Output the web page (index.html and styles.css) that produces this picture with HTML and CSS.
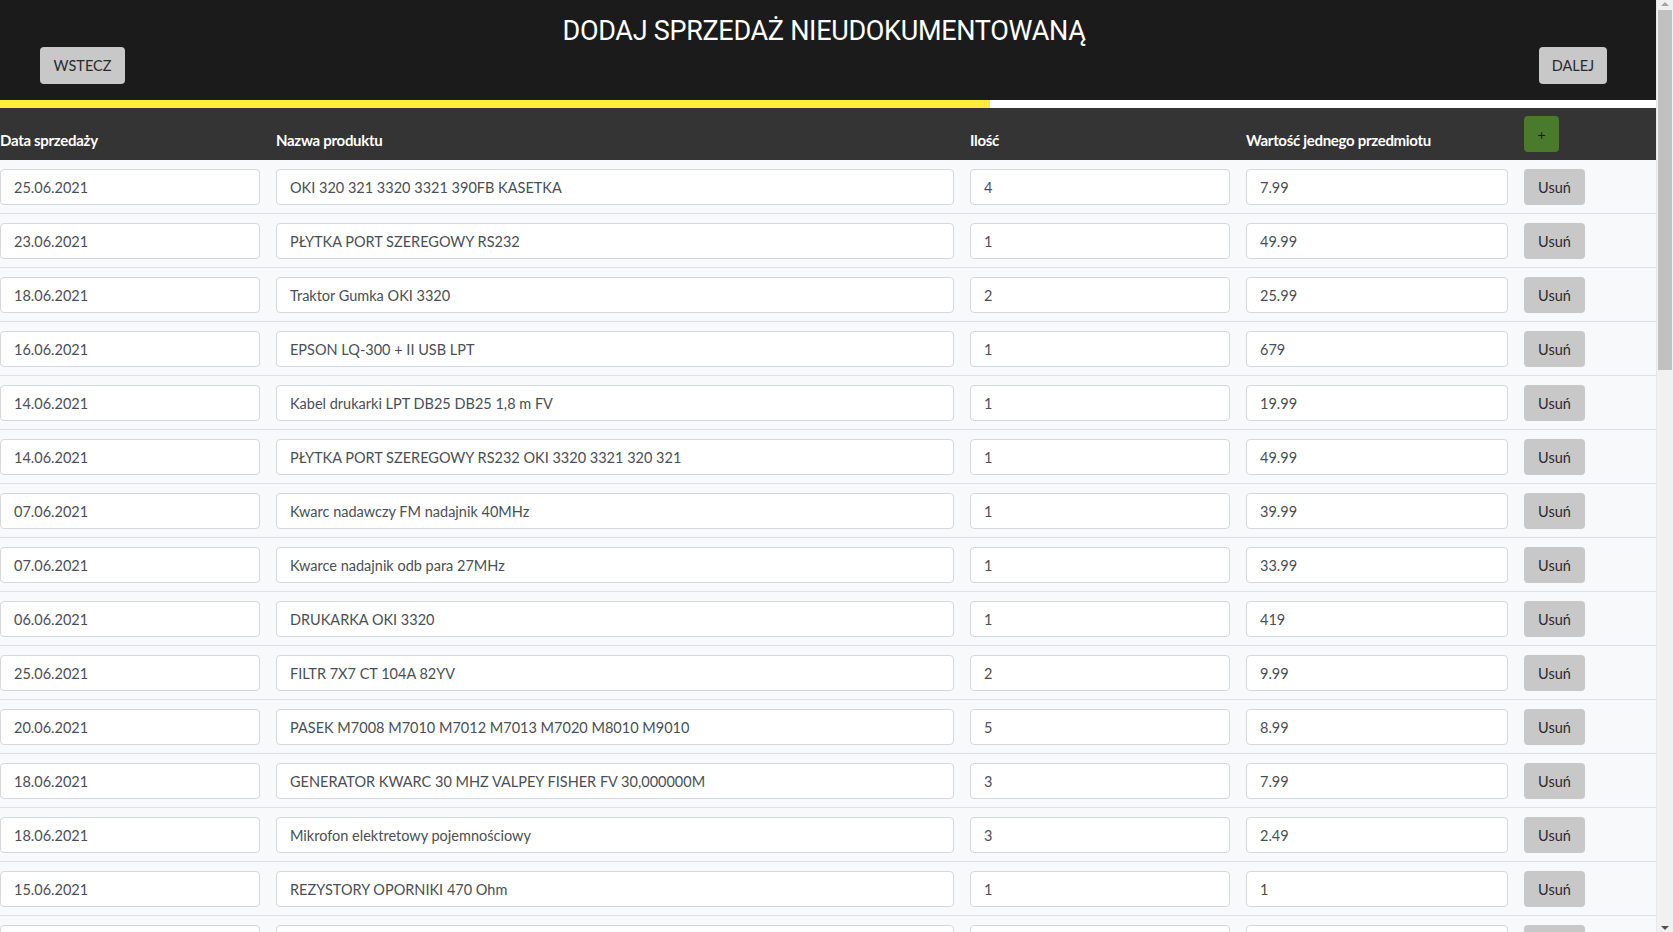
FILE: index.html
```html
<!DOCTYPE html>
<html lang="pl">
<head>
<meta charset="utf-8">
<title>Dodaj sprzedaż nieudokumentowaną</title>
<link rel="stylesheet" href="styles.css">
</head>
<body>
<div class="page">
<header class="topbar">
  <button class="btn btn-gray nav-back">WSTECZ</button>
  <h1 class="title">DODAJ SPRZEDAŻ NIEUDOKUMENTOWANĄ</h1>
  <button class="btn btn-gray nav-next">DALEJ</button>
</header>
<div class="progress"><div class="progress-fill" style="width:59.8%"></div></div>
<main class="sales">
  <div class="grid head">
    <div class="cell"><span class="label">Data sprzedaży</span></div>
    <div class="cell"><span class="label">Nazwa produktu</span></div>
    <div class="cell"><span class="label">Ilość</span></div>
    <div class="cell"><span class="label">Wartość jednego przedmiotu</span></div>
    <div class="cell"><button class="btn btn-add">+</button></div>
  </div>
  <div class="grid row"><div class="cell"><input class="field" value="25.06.2021"></div><div class="cell"><input class="field" value="OKI 320 321 3320 3321 390FB KASETKA"></div><div class="cell"><input class="field" value="4"></div><div class="cell"><input class="field" value="7.99"></div><div class="cell"><button class="btn btn-gray del">Usuń</button></div></div>
  <div class="grid row"><div class="cell"><input class="field" value="23.06.2021"></div><div class="cell"><input class="field" value="PŁYTKA PORT SZEREGOWY RS232"></div><div class="cell"><input class="field" value="1"></div><div class="cell"><input class="field" value="49.99"></div><div class="cell"><button class="btn btn-gray del">Usuń</button></div></div>
  <div class="grid row"><div class="cell"><input class="field" value="18.06.2021"></div><div class="cell"><input class="field" value="Traktor Gumka OKI 3320"></div><div class="cell"><input class="field" value="2"></div><div class="cell"><input class="field" value="25.99"></div><div class="cell"><button class="btn btn-gray del">Usuń</button></div></div>
  <div class="grid row"><div class="cell"><input class="field" value="16.06.2021"></div><div class="cell"><input class="field" value="EPSON LQ-300 + II USB LPT"></div><div class="cell"><input class="field" value="1"></div><div class="cell"><input class="field" value="679"></div><div class="cell"><button class="btn btn-gray del">Usuń</button></div></div>
  <div class="grid row"><div class="cell"><input class="field" value="14.06.2021"></div><div class="cell"><input class="field" value="Kabel drukarki LPT DB25 DB25 1,8 m FV"></div><div class="cell"><input class="field" value="1"></div><div class="cell"><input class="field" value="19.99"></div><div class="cell"><button class="btn btn-gray del">Usuń</button></div></div>
  <div class="grid row"><div class="cell"><input class="field" value="14.06.2021"></div><div class="cell"><input class="field" value="PŁYTKA PORT SZEREGOWY RS232 OKI 3320 3321 320 321"></div><div class="cell"><input class="field" value="1"></div><div class="cell"><input class="field" value="49.99"></div><div class="cell"><button class="btn btn-gray del">Usuń</button></div></div>
  <div class="grid row"><div class="cell"><input class="field" value="07.06.2021"></div><div class="cell"><input class="field" value="Kwarc nadawczy FM nadajnik 40MHz"></div><div class="cell"><input class="field" value="1"></div><div class="cell"><input class="field" value="39.99"></div><div class="cell"><button class="btn btn-gray del">Usuń</button></div></div>
  <div class="grid row"><div class="cell"><input class="field" value="07.06.2021"></div><div class="cell"><input class="field" value="Kwarce nadajnik odb para 27MHz"></div><div class="cell"><input class="field" value="1"></div><div class="cell"><input class="field" value="33.99"></div><div class="cell"><button class="btn btn-gray del">Usuń</button></div></div>
  <div class="grid row"><div class="cell"><input class="field" value="06.06.2021"></div><div class="cell"><input class="field" value="DRUKARKA OKI 3320"></div><div class="cell"><input class="field" value="1"></div><div class="cell"><input class="field" value="419"></div><div class="cell"><button class="btn btn-gray del">Usuń</button></div></div>
  <div class="grid row"><div class="cell"><input class="field" value="25.06.2021"></div><div class="cell"><input class="field" value="FILTR 7X7 CT 104A 82YV"></div><div class="cell"><input class="field" value="2"></div><div class="cell"><input class="field" value="9.99"></div><div class="cell"><button class="btn btn-gray del">Usuń</button></div></div>
  <div class="grid row"><div class="cell"><input class="field" value="20.06.2021"></div><div class="cell"><input class="field" value="PASEK M7008 M7010 M7012 M7013 M7020 M8010 M9010"></div><div class="cell"><input class="field" value="5"></div><div class="cell"><input class="field" value="8.99"></div><div class="cell"><button class="btn btn-gray del">Usuń</button></div></div>
  <div class="grid row"><div class="cell"><input class="field" value="18.06.2021"></div><div class="cell"><input class="field" value="GENERATOR KWARC 30 MHZ VALPEY FISHER FV 30,000000M"></div><div class="cell"><input class="field" value="3"></div><div class="cell"><input class="field" value="7.99"></div><div class="cell"><button class="btn btn-gray del">Usuń</button></div></div>
  <div class="grid row"><div class="cell"><input class="field" value="18.06.2021"></div><div class="cell"><input class="field" value="Mikrofon elektretowy pojemnościowy"></div><div class="cell"><input class="field" value="3"></div><div class="cell"><input class="field" value="2.49"></div><div class="cell"><button class="btn btn-gray del">Usuń</button></div></div>
  <div class="grid row"><div class="cell"><input class="field" value="15.06.2021"></div><div class="cell"><input class="field" value="REZYSTORY OPORNIKI 470 Ohm"></div><div class="cell"><input class="field" value="1"></div><div class="cell"><input class="field" value="1"></div><div class="cell"><button class="btn btn-gray del">Usuń</button></div></div>
  <div class="grid row"><div class="cell"><input class="field" value="15.06.2021"></div><div class="cell"><input class="field" value="KONDENSATOR ELEKTROLITYCZNY 1000uF 25V"></div><div class="cell"><input class="field" value="4"></div><div class="cell"><input class="field" value="1.49"></div><div class="cell"><button class="btn btn-gray del">Usuń</button></div></div>
  <div class="grid row"><div class="cell"><input class="field" value="12.06.2021"></div><div class="cell"><input class="field" value="Taśma barwiąca OKI ML 3320 3321"></div><div class="cell"><input class="field" value="2"></div><div class="cell"><input class="field" value="14.99"></div><div class="cell"><button class="btn btn-gray del">Usuń</button></div></div>
  <div class="grid row"><div class="cell"><input class="field" value="11.06.2021"></div><div class="cell"><input class="field" value="GŁOWICA DRUKUJĄCA OKI 3320"></div><div class="cell"><input class="field" value="1"></div><div class="cell"><input class="field" value="189"></div><div class="cell"><button class="btn btn-gray del">Usuń</button></div></div>
  <div class="grid row"><div class="cell"><input class="field" value="10.06.2021"></div><div class="cell"><input class="field" value="Zasilacz impulsowy 12V 2A"></div><div class="cell"><input class="field" value="1"></div><div class="cell"><input class="field" value="24.99"></div><div class="cell"><button class="btn btn-gray del">Usuń</button></div></div>
  <div class="grid row"><div class="cell"><input class="field" value="09.06.2021"></div><div class="cell"><input class="field" value="KWARC 4 MHZ HC-49S"></div><div class="cell"><input class="field" value="10"></div><div class="cell"><input class="field" value="0.99"></div><div class="cell"><button class="btn btn-gray del">Usuń</button></div></div>
  <div class="grid row"><div class="cell"><input class="field" value="08.06.2021"></div><div class="cell"><input class="field" value="Kabel USB A-B 1,5 m"></div><div class="cell"><input class="field" value="2"></div><div class="cell"><input class="field" value="9.99"></div><div class="cell"><button class="btn btn-gray del">Usuń</button></div></div>
  <div class="grid row"><div class="cell"><input class="field" value="05.06.2021"></div><div class="cell"><input class="field" value="PŁYTA GŁÓWNA OKI 3321"></div><div class="cell"><input class="field" value="1"></div><div class="cell"><input class="field" value="149"></div><div class="cell"><button class="btn btn-gray del">Usuń</button></div></div>
  <div class="grid row"><div class="cell"><input class="field" value="04.06.2021"></div><div class="cell"><input class="field" value="Dioda LED 5mm czerwona"></div><div class="cell"><input class="field" value="20"></div><div class="cell"><input class="field" value="0.29"></div><div class="cell"><button class="btn btn-gray del">Usuń</button></div></div>
  <div class="grid row"><div class="cell"><input class="field" value="03.06.2021"></div><div class="cell"><input class="field" value="ROLKA PAPIERU OKI 3320 WAŁEK"></div><div class="cell"><input class="field" value="1"></div><div class="cell"><input class="field" value="59.99"></div><div class="cell"><button class="btn btn-gray del">Usuń</button></div></div>
  <div class="grid row"><div class="cell"><input class="field" value="02.06.2021"></div><div class="cell"><input class="field" value="Przełącznik dwustabilny ON-OFF"></div><div class="cell"><input class="field" value="5"></div><div class="cell"><input class="field" value="2.99"></div><div class="cell"><button class="btn btn-gray del">Usuń</button></div></div>
  <div class="grid row"><div class="cell"><input class="field" value="01.06.2021"></div><div class="cell"><input class="field" value="EPSON LX-350 LPT USB"></div><div class="cell"><input class="field" value="1"></div><div class="cell"><input class="field" value="899"></div><div class="cell"><button class="btn btn-gray del">Usuń</button></div></div>
  <div class="grid row"><div class="cell"><input class="field" value="31.05.2021"></div><div class="cell"><input class="field" value="Kabel LPT Centronics 36 pin 3 m"></div><div class="cell"><input class="field" value="1"></div><div class="cell"><input class="field" value="29.99"></div><div class="cell"><button class="btn btn-gray del">Usuń</button></div></div>
  <div class="grid row"><div class="cell"><input class="field" value="30.05.2021"></div><div class="cell"><input class="field" value="REZYSTORY OPORNIKI 1 kOhm"></div><div class="cell"><input class="field" value="1"></div><div class="cell"><input class="field" value="1"></div><div class="cell"><button class="btn btn-gray del">Usuń</button></div></div>
  <div class="grid row"><div class="cell"><input class="field" value="29.05.2021"></div><div class="cell"><input class="field" value="Transformator sieciowy 230V 12V"></div><div class="cell"><input class="field" value="1"></div><div class="cell"><input class="field" value="34.99"></div><div class="cell"><button class="btn btn-gray del">Usuń</button></div></div>
  <div class="grid row"><div class="cell"><input class="field" value="28.05.2021"></div><div class="cell"><input class="field" value="KASETKA OKI 390FB 391FB"></div><div class="cell"><input class="field" value="3"></div><div class="cell"><input class="field" value="7.99"></div><div class="cell"><button class="btn btn-gray del">Usuń</button></div></div>
  <div class="grid row"><div class="cell"><input class="field" value="27.05.2021"></div><div class="cell"><input class="field" value="Gniazdo DB9 męskie do druku"></div><div class="cell"><input class="field" value="4"></div><div class="cell"><input class="field" value="1.99"></div><div class="cell"><button class="btn btn-gray del">Usuń</button></div></div>
  <div class="grid row"><div class="cell"><input class="field" value="26.05.2021"></div><div class="cell"><input class="field" value="Kwarc nadawczy FM nadajnik 27MHz"></div><div class="cell"><input class="field" value="1"></div><div class="cell"><input class="field" value="39.99"></div><div class="cell"><button class="btn btn-gray del">Usuń</button></div></div>
  <div class="grid row"><div class="cell"><input class="field" value="25.05.2021"></div><div class="cell"><input class="field" value="SILNIK KROKOWY OKI 3320"></div><div class="cell"><input class="field" value="1"></div><div class="cell"><input class="field" value="79"></div><div class="cell"><button class="btn btn-gray del">Usuń</button></div></div>
  <div class="grid row"><div class="cell"><input class="field" value="24.05.2021"></div><div class="cell"><input class="field" value="Bezpiecznik zwłoczny 2A 5x20"></div><div class="cell"><input class="field" value="10"></div><div class="cell"><input class="field" value="0.49"></div><div class="cell"><button class="btn btn-gray del">Usuń</button></div></div>
  <div class="grid row"><div class="cell"><input class="field" value="21.05.2021"></div><div class="cell"><input class="field" value="PASEK NAPĘDOWY EPSON LQ-300"></div><div class="cell"><input class="field" value="2"></div><div class="cell"><input class="field" value="12.99"></div><div class="cell"><button class="btn btn-gray del">Usuń</button></div></div>
  <div class="grid row"><div class="cell"><input class="field" value="20.05.2021"></div><div class="cell"><input class="field" value="Mikrofon dynamiczny przewodowy"></div><div class="cell"><input class="field" value="1"></div><div class="cell"><input class="field" value="44.99"></div><div class="cell"><button class="btn btn-gray del">Usuń</button></div></div>
  <div class="grid row"><div class="cell"><input class="field" value="19.05.2021"></div><div class="cell"><input class="field" value="GENERATOR KWARC 16 MHZ"></div><div class="cell"><input class="field" value="2"></div><div class="cell"><input class="field" value="5.99"></div><div class="cell"><button class="btn btn-gray del">Usuń</button></div></div>
  <div class="grid row"><div class="cell"><input class="field" value="18.05.2021"></div><div class="cell"><input class="field" value="Traktor Gumka OKI 3321"></div><div class="cell"><input class="field" value="2"></div><div class="cell"><input class="field" value="25.99"></div><div class="cell"><button class="btn btn-gray del">Usuń</button></div></div>
  <div class="grid row"><div class="cell"><input class="field" value="17.05.2021"></div><div class="cell"><input class="field" value="Kabel drukarki LPT DB25 DB25 3 m"></div><div class="cell"><input class="field" value="1"></div><div class="cell"><input class="field" value="24.99"></div><div class="cell"><button class="btn btn-gray del">Usuń</button></div></div>
  <div class="grid row"><div class="cell"><input class="field" value="14.05.2021"></div><div class="cell"><input class="field" value="DRUKARKA OKI 3321"></div><div class="cell"><input class="field" value="1"></div><div class="cell"><input class="field" value="449"></div><div class="cell"><button class="btn btn-gray del">Usuń</button></div></div>
  <div class="grid row"><div class="cell"><input class="field" value="13.05.2021"></div><div class="cell"><input class="field" value="FILTR 10X10 CT 104A"></div><div class="cell"><input class="field" value="2"></div><div class="cell"><input class="field" value="9.99"></div><div class="cell"><button class="btn btn-gray del">Usuń</button></div></div>
  <div class="grid row"><div class="cell"><input class="field" value="12.05.2021"></div><div class="cell"><input class="field" value="PŁYTKA PORT SZEREGOWY RS232 OKI 390FB"></div><div class="cell"><input class="field" value="1"></div><div class="cell"><input class="field" value="49.99"></div><div class="cell"><button class="btn btn-gray del">Usuń</button></div></div>
</main>
</div>
<div class="scrollbar" aria-hidden="true">
  <span class="sb-arrow sb-up"></span>
  <span class="sb-thumb"></span>
  <span class="sb-arrow sb-down"></span>
</div>
</body>
</html>
```

FILE: styles.css
```css
html, body {
  margin: 0;
  padding: 0;
}
body {
  font-family: Lato, "Noto Sans", sans-serif;
  background: #f8f9fa;
  color: #212529;
}
.page {
  margin-right: 17px;
}

/* fake window scrollbar (overlay on the right edge) */
.scrollbar {
  position: fixed;
  top: 0;
  right: 0;
  width: 17px;
  height: 100vh;
  background: #f1f1f1;
  border-left: 1px solid #e8e8e8;
  box-sizing: border-box;
}
.sb-thumb {
  position: absolute;
  top: 10px;
  left: 1px;
  width: 14px;
  height: 360px;
  background: #c1c1c1;
}
.sb-arrow {
  position: absolute;
  left: 4px;
  width: 0;
  height: 0;
  border-left: 4px solid transparent;
  border-right: 4px solid transparent;
}
.sb-up {
  top: 2px;
  border-bottom: 4px solid #a3a3a3;
}
.sb-down {
  bottom: 2px;
  border-top: 4px solid #505050;
}

.topbar {
  background: #1b1b1b;
  height: 100px;
  box-sizing: border-box;
  padding: 0 49px 16px 40px;
  display: grid;
  grid-template-columns: auto 1fr auto;
  align-items: end;
}
.title {
  margin: 0;
  align-self: start;
  padding: 13px 16px 0 0;
  text-align: center;
  color: #ffffff;
  font-family: Roboto, "Liberation Sans", sans-serif;
  font-weight: 400;
  font-size: 27px;
  line-height: 36px;
  letter-spacing: -0.3px;
}
.btn {
  border: 0;
  border-radius: 4px;
  font-family: Lato, "Noto Sans", sans-serif;
  cursor: pointer;
}
.btn-gray {
  background: #c8c8c8;
  color: #2a2a2a;
  font-size: 14.5px;
  height: 37px;
  padding: 0 12px;
}
.nav-back { width: 85px; }
.nav-next { width: 68px; }

.progress {
  height: 8px;
  background: #ffffff;
}
.progress-fill {
  height: 100%;
  background: #ffeb3b;
}

.grid {
  display: grid;
  grid-template-columns: 276fr 694fr 276fr 278fr 132fr;
}
.cell {
  padding-right: 16px;
  min-width: 0;
}
.head {
  background: #343434;
  height: 52px;
  box-sizing: border-box;
  padding-bottom: 8px;
  align-items: end;
}
.label {
  display: block;
  color: #ffffff;
  font-weight: 700;
  font-size: 15px;
  line-height: 20px;
  margin-bottom: 2px;
  letter-spacing: -0.3px;
}
.btn-add {
  width: 35px;
  height: 36px;
  background: #4a7a2c;
  color: #1b1b1b;
  font-size: 14px;
  padding: 0;
}
.row {
  padding: 9px 0 8px;
  border-bottom: 1px solid #dee2e6;
  background: #f8f9fa;
}
.field {
  display: block;
  width: 100%;
  box-sizing: border-box;
  height: 36px;
  padding: 0 13px;
  border: 1px solid #d6d9dc;
  border-radius: 4px;
  background: #ffffff;
  color: #4a4f55;
  font-family: Lato, "Noto Sans", sans-serif;
  font-size: 14.5px;
}
.del {
  width: 61px;
  height: 36px;
  padding: 0;
}
```
